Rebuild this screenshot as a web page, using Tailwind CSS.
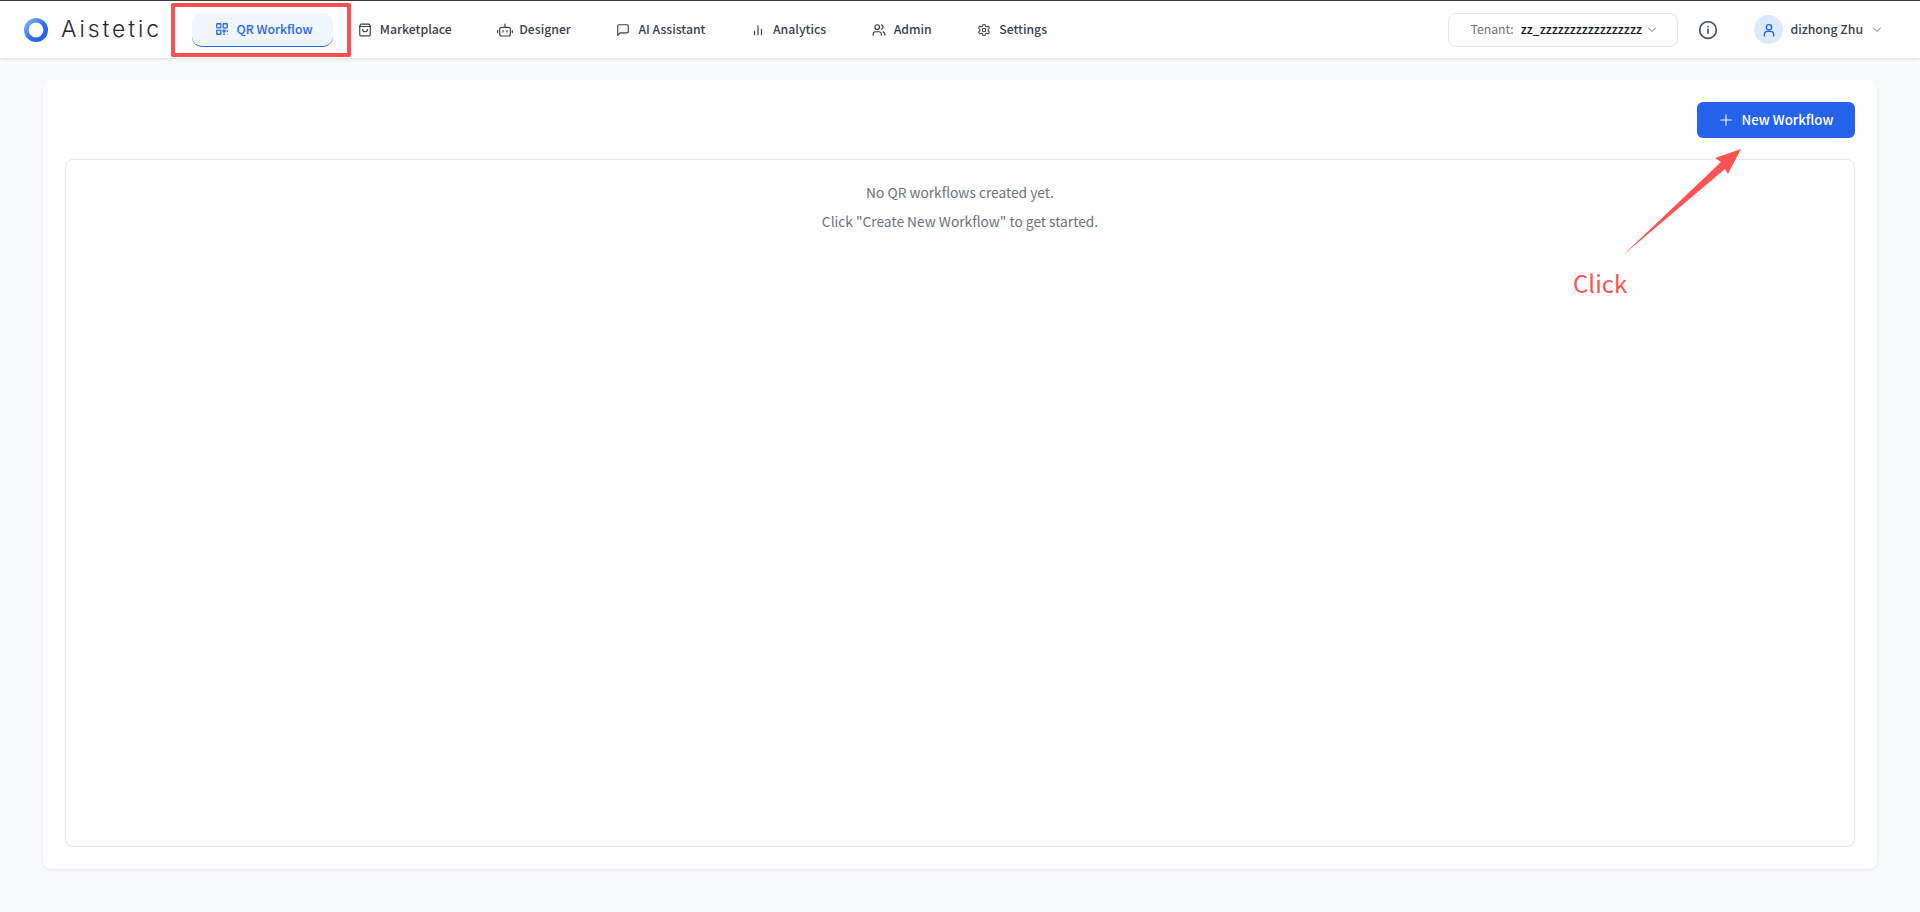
<!DOCTYPE html>
<html lang="en">
<head>
<meta charset="utf-8">
<title>Aistetic</title>
<script src="https://cdn.jsdelivr.net/npm/@tailwindcss/browser@4"></script>
</head>
<body class="relative h-[912px] overflow-hidden bg-[#f9fafb] font-['Noto_Sans_CJK_SC',sans-serif] text-[#374151]">
<header class="relative flex h-[58px] items-center justify-between border-t border-[#3a3a3a] bg-white pl-6 pr-[37px] shadow-[0_1px_4px_rgba(0,0,0,0.12)]">
  <div class="flex items-center">
    <div class="flex w-[168px] items-center">
      <svg class="size-6" viewBox="0 0 24 24" fill="none">
        <defs><linearGradient id="ring" x1="0" y1="0" x2="1" y2="1"><stop offset="0" stop-color="#7db5fb"/><stop offset="0.55" stop-color="#2f6ff0"/><stop offset="1" stop-color="#1f5ee8"/></linearGradient></defs>
        <circle cx="12" cy="12" r="9.7" stroke="url(#ring)" stroke-width="4.6"/>
      </svg>
      <span class="ml-[13px] font-['Inter',sans-serif] text-[23px] leading-none font-light tracking-[2.9px] text-[#1f2937]">Aistetic</span>
    </div>
    <nav class="flex items-center gap-1 text-[12.25px] font-medium">
      <a class="flex h-[34px] items-center gap-[8px] rounded-[10px] border-b-[1.5px] border-[#2563eb] bg-[#eff6ff] pr-[20.5px] pl-[22.5px] text-[#2563eb]">
        <svg class="size-[14px]" viewBox="0 0 24 24" fill="none" stroke="currentColor" stroke-width="2.2"><rect x="3" y="3" width="7" height="7" rx="1"/><rect x="14" y="3" width="7" height="7" rx="1"/><rect x="3" y="14" width="7" height="7" rx="1"/><path d="M14 14h3v3h-3zM21 14v3M14 21h3M21 21v-1"/></svg>
        QR Workflow
      </a>
      <a class="flex h-[34px] items-center gap-[8px] px-[20.75px]">
        <svg class="size-[14px]" viewBox="0 0 24 24" fill="none" stroke="currentColor" stroke-width="2" stroke-linecap="round" stroke-linejoin="round"><path d="M5 2h14l2 3v15a2 2 0 0 1-2 2H5a2 2 0 0 1-2-2V5z"/><path d="M3 6h18M8 11a4 4 0 0 0 8 0"/></svg>
        Marketplace
      </a>
      <a class="flex h-[34px] items-center gap-[6px] px-[20.75px]">
        <svg class="size-4" viewBox="0 0 24 24" fill="none" stroke="currentColor" stroke-width="1.8" stroke-linecap="round" stroke-linejoin="round"><path d="M12 8V3"/><rect x="4" y="8" width="16" height="13" rx="3"/><path d="M1 13v3M23 13v3M9 13v2M15 13v2"/></svg>
        Designer
      </a>
      <a class="flex h-[34px] items-center gap-[8px] px-[20.75px]">
        <svg class="size-[14px]" viewBox="0 0 24 24" fill="none" stroke="currentColor" stroke-width="2" stroke-linecap="round" stroke-linejoin="round"><path d="M21 15a2 2 0 0 1-2 2H7l-4 4V5a2 2 0 0 1 2-2h14a2 2 0 0 1 2 2z"/></svg>
        AI Assistant
      </a>
      <a class="flex h-[34px] items-center gap-[8px] px-[20.75px]">
        <svg class="size-[14px]" viewBox="0 0 24 24" fill="none" stroke="currentColor" stroke-width="2" stroke-linecap="round"><path d="M6 20v-6M12 20V5M18 20v-9"/></svg>
        Analytics
      </a>
      <a class="flex h-[34px] items-center gap-[8px] px-[20.75px]">
        <svg class="size-[14px]" viewBox="0 0 24 24" fill="none" stroke="currentColor" stroke-width="2" stroke-linecap="round" stroke-linejoin="round"><path d="M16 21v-2a4 4 0 0 0-4-4H6a4 4 0 0 0-4 4v2"/><circle cx="9" cy="7" r="4"/><path d="M22 21v-2a4 4 0 0 0-3-3.87M16 3.13a4 4 0 0 1 0 7.75"/></svg>
        Admin
      </a>
      <a class="flex h-[34px] items-center gap-[8px] px-[20.75px]">
        <svg class="size-[14px]" viewBox="0 0 24 24" fill="none" stroke="currentColor" stroke-width="1.8" stroke-linecap="round" stroke-linejoin="round"><path d="M12.22 2h-.44a2 2 0 0 0-2 2v.18a2 2 0 0 1-1 1.73l-.43.25a2 2 0 0 1-2 0l-.15-.08a2 2 0 0 0-2.73.73l-.22.38a2 2 0 0 0 .73 2.73l.15.1a2 2 0 0 1 1 1.72v.51a2 2 0 0 1-1 1.74l-.15.09a2 2 0 0 0-.73 2.73l.22.38a2 2 0 0 0 2.73.73l.15-.08a2 2 0 0 1 2 0l.43.25a2 2 0 0 1 1 1.73V20a2 2 0 0 0 2 2h.44a2 2 0 0 0 2-2v-.18a2 2 0 0 1 1-1.73l.43-.25a2 2 0 0 1 2 0l.15.08a2 2 0 0 0 2.73-.73l.22-.39a2 2 0 0 0-.73-2.73l-.15-.08a2 2 0 0 1-1-1.74v-.5a2 2 0 0 1 1-1.74l.15-.09a2 2 0 0 0 .73-2.73l-.22-.38a2 2 0 0 0-2.73-.73l-.15.08a2 2 0 0 1-2 0l-.43-.25a2 2 0 0 1-1-1.73V4a2 2 0 0 0-2-2z"/><circle cx="12" cy="12" r="3"/></svg>
        Settings
      </a>
    </nav>
  </div>
  <div class="flex items-center">
    <div class="flex h-[34px] w-[230px] items-center rounded-lg border border-[#e5e7eb] pl-[21px] text-[12.25px]">
      <span class="text-[#6b7280]">Tenant:</span>
      <span class="ml-[7px] w-[123px] font-medium whitespace-nowrap text-[#111827]">zz_zzzzzzzzzzzzzzzzz</span>
      <svg class="ml-[2px] size-3 shrink-0" viewBox="0 0 24 24" fill="none" stroke="#6b7280" stroke-width="2" stroke-linecap="round" stroke-linejoin="round"><path d="m5 8 7 7 7-7"/></svg>
    </div>
    <svg class="ml-[20px] size-5" viewBox="0 0 24 24" fill="none" stroke="#4b5563" stroke-width="2" stroke-linecap="round"><circle cx="12" cy="12" r="10"/><path d="M12 16v-5M12 8h.01"/></svg>
    <div class="ml-[36px] flex size-[29px] items-center justify-center rounded-full bg-[#dbeafe]">
      <svg class="size-4" viewBox="0 0 24 24" fill="none" stroke="#2563eb" stroke-width="2" stroke-linecap="round" stroke-linejoin="round"><circle cx="12" cy="8" r="4"/><path d="M5 21v-2a5 5 0 0 1 5-5h4a5 5 0 0 1 5 5v2"/></svg>
    </div>
    <span class="ml-[7px] text-[12.25px] font-medium">dizhong Zhu</span>
    <svg class="ml-[8px] size-3" viewBox="0 0 24 24" fill="none" stroke="#6b7280" stroke-width="2" stroke-linecap="round" stroke-linejoin="round"><path d="m5 8 7 7 7-7"/></svg>
  </div>
</header>

<main class="mx-[43px] mt-[22px] flex h-[789px] flex-col rounded-lg bg-white p-[22px] pb-[22px] shadow-[0_1px_3px_rgba(0,0,0,0.08)]">
  <div class="flex justify-end">
    <button class="flex h-9 w-[158px] items-center justify-center gap-[9px] rounded-md bg-[#2563eb] text-[13.25px] font-medium text-white">
      <svg class="size-[14px]" viewBox="0 0 24 24" fill="none" stroke="currentColor" stroke-width="1.8" stroke-linecap="round"><path d="M12 3v18M3 12h18"/></svg>
      New Workflow
    </button>
  </div>
  <div class="mt-[21px] flex-1 rounded-lg border border-[#e5e7eb] pt-[20px] text-center text-[13.75px] text-[#6b7280]">
    <p class="leading-[24px]">No QR workflows created yet.</p>
    <p class="mt-[5px] leading-[24px]">Click "Create New Workflow" to get started.</p>
  </div>
</main>

<div class="absolute top-[3px] left-[171px] h-[54px] w-[180px] rounded-[2px] border-4 border-[#fa5050]"></div>
<svg class="absolute top-0 left-0" width="1920" height="912" viewBox="0 0 1920 912"><polygon points="1622,256 1721,162 1715,158 1741,149 1728,174 1725,169" fill="#fc5353"/></svg>
<span class="absolute top-[266px] left-[1573px] text-[24px] leading-[34px] text-[#fc5353]">Click</span>
</body>
</html>
